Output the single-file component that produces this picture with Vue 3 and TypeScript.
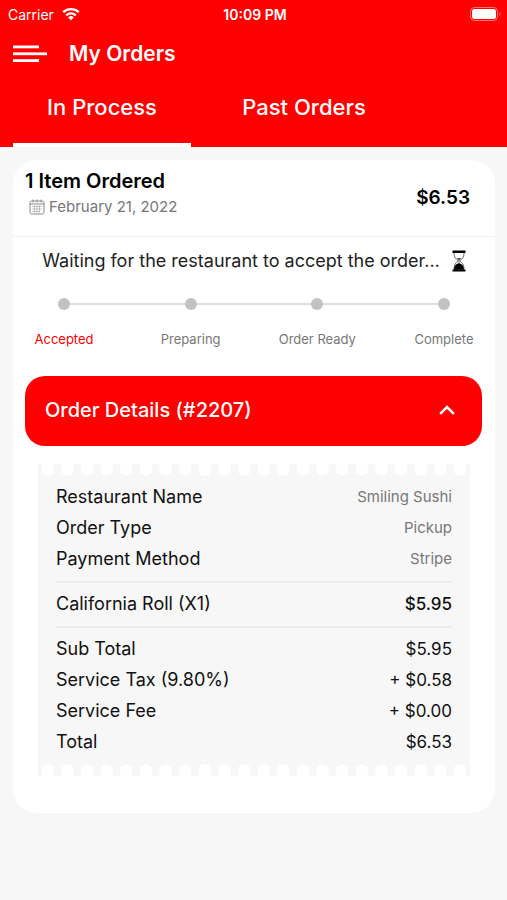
<script setup lang="ts">
import { ref } from 'vue'

interface Line {
  label: string
  value: string
}

const tabs: string[] = ['In Process', 'Past Orders']
const activeTab = ref(0)
const open = ref(true)

const steps: string[] = ['Accepted', 'Preparing', 'Order Ready', 'Complete']
const currentStep = 0

const info: Line[] = [
  { label: 'Restaurant Name', value: 'Smiling Sushi' },
  { label: 'Order Type', value: 'Pickup' },
  { label: 'Payment Method', value: 'Stripe' },
]
const items: Line[] = [{ label: 'California Roll (X1)', value: '$5.95' }]
const totals: Line[] = [
  { label: 'Sub Total', value: '$5.95' },
  { label: 'Service Tax (9.80%)', value: '+ $0.58' },
  { label: 'Service Fee', value: '+ $0.00' },
  { label: 'Total', value: '$6.53' },
]
</script>

<template>
  <div class="app">
    <header class="top">
      <div class="status">
        <span class="carrier">
          Carrier
          <svg width="18" height="14" viewBox="0 0 18 14" fill="none" stroke="#fff" stroke-width="2.3" aria-hidden="true">
            <path d="M1.2 5.2a11.2 11.2 0 0 1 15.6 0" />
            <path d="M4.2 8.3a7 7 0 0 1 9.6 0" />
            <path d="M9 13.2 6.2 10.4a4 4 0 0 1 5.6 0z" fill="#fff" stroke="none" />
          </svg>
        </span>
        <span class="clock">10:09 PM</span>
        <span class="battery">
          <svg width="32" height="14" viewBox="0 0 32 14" aria-hidden="true">
            <rect x="0.5" y="0.5" width="27" height="13" rx="4" fill="none" stroke="#fff" stroke-opacity="0.45" />
            <rect x="2" y="2" width="24" height="10" rx="2.5" fill="#fff" />
            <path d="M29.5 5a2.4 2.4 0 0 1 0 4z" fill="#fff" fill-opacity="0.5" />
          </svg>
        </span>
      </div>

      <div class="title-bar">
        <button class="menu" type="button" aria-label="Menu">
          <svg width="34" height="18" viewBox="0 0 34 18" fill="#fff" aria-hidden="true">
            <rect x="0" y="0.5" width="26" height="2.8" />
            <rect x="0" y="7.4" width="34" height="2.8" />
            <rect x="0" y="14.2" width="26" height="2.8" />
          </svg>
        </button>
        <h1>My Orders</h1>
      </div>

      <nav class="tabs">
        <button
          v-for="(tab, i) in tabs"
          :key="tab"
          type="button"
          class="tab"
          :class="{ active: i === activeTab }"
          @click="activeTab = i"
        >
          {{ tab }}
        </button>
      </nav>
    </header>

    <main class="card">
      <section class="summary">
        <div>
          <h2>1 Item Ordered</h2>
          <p class="date">
            <svg width="16" height="16" viewBox="0 0 16 16" fill="none" stroke="#8a8a8a" aria-hidden="true">
              <rect x="1" y="2" width="14" height="13" rx="1.5" />
              <path d="M1 5h14M4 0.5v3M8 0.5v3M12 0.5v3" />
              <path d="M3 7.5h10M3 10h10M3 12.5h8M5.5 6.5v7M8 6.5v7M10.5 6.5v7" stroke-opacity="0.6" stroke-width="0.8" />
            </svg>
            February 21, 2022
          </p>
        </div>
        <strong class="amount">$6.53</strong>
      </section>

      <section class="progress">
        <p class="message">
          Waiting for the restaurant to accept the order...
          <svg width="14" height="22" viewBox="0 0 14 22" aria-hidden="true">
            <path d="M0.5 0.5h13v2.4h-13zM0.5 19.6h13v2h-13z" fill="#000" />
            <path d="M2 2.9c0 4.400 1.400 5.600 4.300 8C3.400 13 2 14.600 2 19.600M12 2.900c0 4.400-1.400 5.600-4.300 8C10.600 13 12 14.600 12 19.600" fill="none" stroke="#555" stroke-width="0.9" />
            <path d="M4.600 8h4.800L7.400 10.200v3.400h-.8v-3.400z" fill="#555" />
            <path d="M7 13.200c3 .6 5 2.600 5 6.600H2c0-4 2-6 5-6.600z" fill="#000" />
          </svg>
        </p>
        <ol class="steps">
          <li v-for="(step, i) in steps" :key="step" :class="{ current: i === currentStep }">
            <i class="dot"></i>
            <span>{{ step }}</span>
          </li>
        </ol>
      </section>

      <button class="toggle" type="button" :aria-expanded="open" @click="open = !open">
        Order Details (#2207)
        <svg width="16" height="10" viewBox="0 0 16 10" fill="none" stroke="#fff" stroke-width="2.6" aria-hidden="true">
          <path d="M1.200 8.800 8 2l6.800 6.800" />
        </svg>
      </button>

      <div v-if="open" class="receipt">
        <table>
          <tbody class="info">
            <tr v-for="line in info" :key="line.label">
              <th scope="row">{{ line.label }}</th>
              <td>{{ line.value }}</td>
            </tr>
          </tbody>
        </table>
        <table>
          <tbody>
            <tr v-for="line in items" :key="line.label">
              <th scope="row">{{ line.label }}</th>
              <td class="strong">{{ line.value }}</td>
            </tr>
          </tbody>
        </table>
        <table>
          <tbody>
            <tr v-for="line in totals" :key="line.label">
              <th scope="row">{{ line.label }}</th>
              <td>{{ line.value }}</td>
            </tr>
          </tbody>
        </table>
      </div>
    </main>
  </div>
</template>

<style>
body {
  margin: 0;
  background: #f7f7f7;
}
</style>

<style scoped>
.app {
  min-height: 100vh;
  background: #f7f7f7;
  color: #111;
  font-family: Inter, "Liberation Sans", sans-serif;
}

h1,
h2,
p,
ol {
  margin: 0;
  padding: 0;
}

button {
  border: 0;
  background: none;
  color: #fff;
  font-family: inherit;
  cursor: pointer;
}

svg {
  flex: none;
}

.top {
  background: #f00;
  color: #fff;
}

.status {
  display: grid;
  grid-template-columns: 1fr auto 1fr;
  align-items: center;
  height: 28px;
  padding: 0 5px 0 8px;
  font-size: 14px;
}

.carrier {
  display: flex;
  align-items: center;
  gap: 8px;
}

.clock {
  font-weight: 600;
}

.battery {
  display: flex;
  justify-content: flex-end;
}

.title-bar {
  display: flex;
  align-items: center;
  gap: 22px;
  height: 52px;
  padding: 0 13px;
}

.menu {
  display: flex;
  padding: 0;
}

h1 {
  font-size: 21px;
  font-weight: 600;
  line-height: 28px;
}

.tabs {
  display: flex;
  gap: 24px;
  padding: 0 13px;
}

.tab {
  width: 178px;
  height: 67px;
  padding: 0 0 10px;
  border-bottom: 4px solid transparent;
  font-size: 22px;
  font-weight: 500;
}

.tab.active {
  border-bottom-color: #fff;
}

.card {
  margin: 13px 12px 0 13px;
  padding-bottom: 37px;
  border-radius: 24px;
  background: #fff;
}

.summary {
  display: flex;
  align-items: center;
  justify-content: space-between;
  height: 76px;
  padding: 0 25px 0 12px;
  border-bottom: 1px solid #f2f2f2;
}

h2 {
  color: #000;
  font-size: 20px;
  font-weight: 600;
  line-height: 26px;
}

.date {
  display: flex;
  align-items: center;
  gap: 4px;
  padding: 0 4px 8px;
  color: #777;
  font-size: 15px;
  line-height: 26px;
}

.amount {
  padding-bottom: 2px;
  color: #000;
  font-size: 19px;
  font-weight: 600;
}

.message {
  display: flex;
  align-items: center;
  justify-content: center;
  gap: 12px;
  padding-top: 12px;
  color: #222;
  font-size: 18px;
  line-height: 24px;
  white-space: nowrap;
}

.steps {
  display: flex;
  justify-content: space-between;
  margin: 25px 21px 0;
  background: linear-gradient(#ddd, #ddd) center 5px / calc(100% - 60px) 2px no-repeat;
  list-style: none;
}

.steps li {
  display: flex;
  flex-direction: column;
  align-items: center;
  gap: 19px;
  width: 60px;
  color: #777;
  font-size: 13px;
  line-height: 20px;
  white-space: nowrap;
}

.steps .current {
  color: #f00;
}

.dot {
  width: 12px;
  height: 12px;
  border-radius: 50%;
  background: #c2c2c2;
}

.toggle {
  display: flex;
  align-items: center;
  justify-content: space-between;
  width: calc(100% - 25px);
  height: 70px;
  margin: 27px 13px 18px 12px;
  padding: 0 27px 3px 20px;
  border-radius: 20px;
  background: #f00;
  font-size: 20px;
  font-weight: 500;
}

.receipt {
  margin: 0 25px;
  padding: 17px 18px 19px;
  background:
    linear-gradient(90deg, transparent 4px, #fff 4px, #fff 16px, transparent 16px) left top / 20px 6px round no-repeat,
    radial-gradient(circle at 50% 6px, #fff 6px, transparent 6px) left top / 20px 12px round no-repeat,
    linear-gradient(90deg, transparent 4px, #fff 4px, #fff 16px, transparent 16px) left bottom / 20px 6px round no-repeat,
    radial-gradient(circle at 50% 6px, #fff 6px, transparent 6px) left bottom / 20px 12px round no-repeat,
    #f7f7f7;
}

table {
  width: 100%;
  border-collapse: collapse;
}

table + table {
  margin-top: 7px;
  border-top: 2px solid #ededed;
}

table + table tr:first-child > * {
  padding-top: 5px;
}

th,
td {
  height: 31px;
  padding: 0;
  font-size: 17px;
  font-weight: 400;
  line-height: 30px;
}

th {
  font-size: 18px;
  text-align: left;
}

td {
  text-align: right;
}

.info td {
  color: #777;
  font-size: 15px;
}

td.strong {
  font-weight: 500;
}
</style>
